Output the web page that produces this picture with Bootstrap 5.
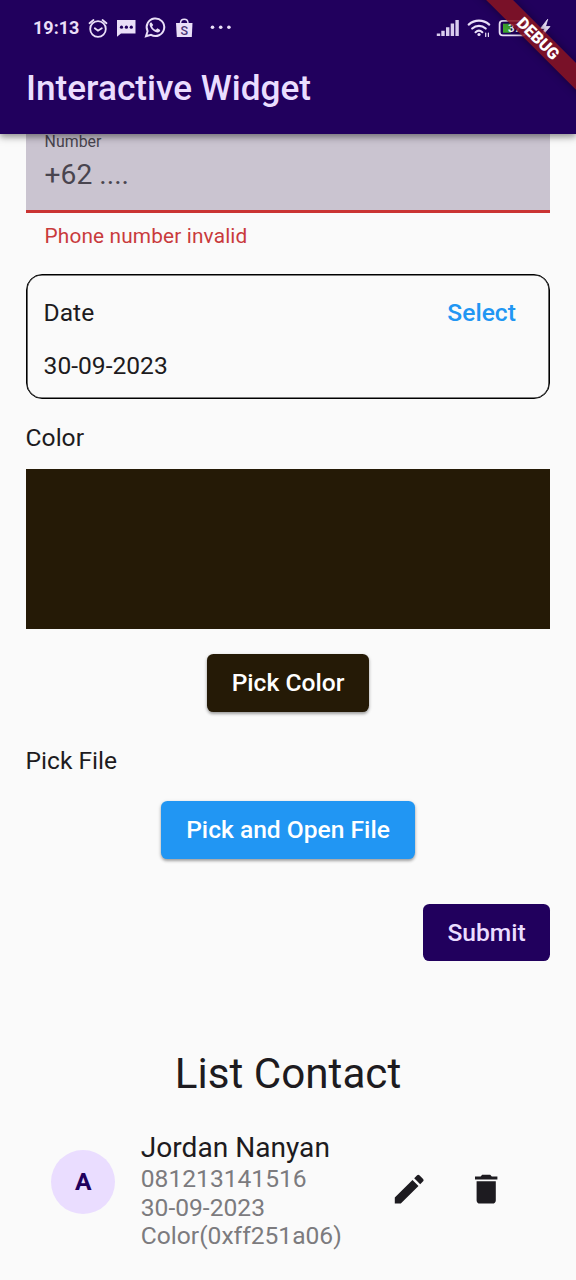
<!DOCTYPE html>
<html lang="en">
<head>
<meta charset="utf-8">
<meta name="viewport" content="width=device-width, initial-scale=1">
<title>Interactive Widget</title>
<link href="https://cdn.jsdelivr.net/npm/bootstrap@5.3.0/dist/css/bootstrap.min.css" rel="stylesheet">
<style>
body{font-family:Roboto,"Liberation Sans",sans-serif;background:#fafafa;color:#1d1b20;width:576px;height:1280px;overflow:hidden;font-size:24.6px}
.fw-mid{font-weight:500}
.topbar{height:133.5px;background:#21005d;color:#eaddff;z-index:2;box-shadow:0 3px 6px rgba(0,0,0,.34),0 1px 12px rgba(0,0,0,.16)}
.statusbar{height:56px;padding-left:33px}
.clock{font-size:18px;font-weight:700;line-height:56px;width:54px;color:#eadff8}
.app-title{font-size:35.2px;line-height:64px;padding-left:26px;letter-spacing:0}
.debug-corner{right:0;top:0;width:120px;height:120px;overflow:hidden;z-index:3}
.debug-tape{right:-62px;top:28.8px;width:200px;height:19.4px;transform:rotate(45deg);background:rgba(134,20,32,.87);box-shadow:0 0 8px rgba(0,0,0,.4);color:#fff;font-size:16.3px;font-weight:900;line-height:19.4px}
.page{padding:0 25.6px}
.phone-field{height:79.5px;background:#cac4d0;border-bottom:3.2px solid #ca3433;padding-left:19px;color:#49454f}
.phone-label{font-size:15.9px;line-height:16px}
.phone-hint{font-size:28.2px;line-height:30px;margin-top:10px}
.error-text{font-size:20.8px;line-height:26px;margin:10px 0 0 19px;color:#c93a3c;letter-spacing:.15px}
.date-card{height:125px;margin-top:24.6px;border:1px solid #000;box-shadow:inset 0 0 0 .6px #000;border-radius:16px;padding:22.4px 33.5px 0 17px}
.line32{line-height:32px}
.select-link{color:#2196f3;text-decoration:none}
.swatch{height:160px;background:#251a06;margin-top:15px}
.app-btn{--bs-btn-border-width:0;--bs-btn-padding-y:0;--bs-btn-padding-x:0;--bs-btn-font-size:24.6px;--bs-btn-font-weight:500;--bs-btn-color:#fff;height:57.6px;line-height:57.6px;border-radius:6.4px;box-shadow:0 2px 3px rgba(0,0,0,.3),0 1px 4px rgba(0,0,0,.12)}
.btn-color{background:#251a06;width:162.4px;margin-top:25.5px}
.btn-file{background:#2196f3;width:253.6px;margin-top:24.5px}
.btn-submit{background:#21005d;color:#eaddff;width:127.6px;margin-top:44.8px;box-shadow:none}
.list-title{font-size:42.2px;line-height:50px;margin-top:88px}
.contact{margin-top:30px;padding:0 51px 0 25.6px;height:123px}
.avatar{width:64px;height:64px;background:#eaddff;color:#21005d;margin-top:-17px;font-size:24.6px}
.contact-text{width:275px;padding-left:25.6px;color:#7c7b7e;line-height:28.8px}
.contact-name{font-size:28.1px;line-height:33px;padding-bottom:1.2px;color:#1d1b20}
.actions{gap:38.4px;margin-top:-4px}
</style>
</head>
<body>
<header class="topbar position-relative">
  <div class="statusbar d-flex">
    <span class="clock">19:13</span>
    <svg width="489" height="56" viewBox="87 0 489 56" fill="none" stroke="#eadff8" stroke-width="1.8" stroke-linecap="round">
      <circle cx="98" cy="29" r="7.8"/><path d="M94.8 28.2l3.2 2.5 3.8-2.5M89.5 23.3l4-3.3M102.5 20l4 3.3"/>
      <path d="M117 20h18.5v13.5H121l-4 3.2z" fill="#eadff8" stroke="none"/>
      <g fill="#21005d" stroke="none"><circle cx="121.5" cy="27.2" r="1.6"/><circle cx="126.4" cy="27.2" r="1.6"/><circle cx="131.3" cy="27.2" r="1.6"/></g>
      <path d="M146 36.2l1.600-5A8.800 8.800 0 1 1 151 34.800z" stroke-width="2"/>
      <path d="M151.2 22.3c-2 .8-2 2.500-1 4.500 1.700 3.200 4 5 7 5.600 1.700.2 3-1 3-2.500l-2.800-1.600-1.500 1.500c-1.600-.5-3-1.700-3.800-3.400l1.100-1.400z" fill="#eadff8" stroke="none"/>
      <path d="M176 23h16.500l-.7 14h-15z" fill="#eadff8" stroke="none"/>
      <path d="M180.5 23c.2-5 7.300-5 7.500 0" stroke-width="1.5"/>
      <text x="184.2" y="34.5" text-anchor="middle" font-family="Roboto, sans-serif" font-size="12.5" font-weight="500" fill="#4a3475" stroke="none">S</text>
      <g fill="#eadff8" stroke="none"><circle cx="212.5" cy="27.3" r="1.8"/><circle cx="220.7" cy="27.3" r="1.8"/><circle cx="228.9" cy="27.3" r="1.8"/></g>
      <path d="M438.5 36v-2.500M443 36v-5.300M447.700 36v-8.800M452.400 36v-12.500M457.100 36v-16" stroke-width="3.400" stroke="#d9cdee" stroke-linecap="butt"/>
      <path d="M468.7 24.6c6-5.200 14.500-5.200 20.500 0M472.200 28.500c4-3.600 9.500-3.600 13.500 0M475.600 32.200c2-1.800 4.700-1.800 6.700 0" stroke-width="2.2"/>
      <circle cx="479" cy="34.5" r="1.6" fill="#eadff8" stroke="none"/>
      <path d="M485.7 36.5v-3.500M488.400 33v3.500" stroke-width="1.2"/>
      <rect x="499.6" y="20.8" width="26" height="14.6" rx="3.2"/>
      <path d="M528.7 26v4" stroke-width="2"/>
      <path d="M503 23.7h8v9h-8z" fill="#3fa62d" stroke="none"/>
      <text x="508" y="32" font-family="Roboto, sans-serif" font-size="11.5" font-weight="700" fill="#fff" stroke="none">37</text>
      <path d="M547.500 19.500l-7 9h4l-2.500 7.500 8-9.500h-4.200z" fill="#eadff8" stroke-width=".8"/>
    </svg>
  </div>
  <h1 class="app-title fw-mid m-0">Interactive Widget</h1>
</header>
<div class="debug-corner position-absolute"><div class="debug-tape position-absolute text-center">DEBUG</div></div>

<main class="page">
  <div class="phone-field">
    <div class="phone-label">Number</div>
    <div class="phone-hint">+62 ....</div>
  </div>
  <div class="error-text">Phone number invalid</div>

  <section class="date-card">
    <div class="d-flex justify-content-between line32">
      <span>Date</span><a href="#" class="select-link fw-mid">Select</a>
    </div>
    <div class="line32" style="margin-top:21px">30-09-2023</div>
  </section>

  <div class="line32" style="margin-top:23.3px">Color</div>
  <div class="swatch"></div>
  <div class="d-flex justify-content-center"><button class="btn app-btn btn-color">Pick Color</button></div>

  <div class="line32" style="margin-top:33px">Pick File</div>
  <div class="d-flex justify-content-center"><button class="btn app-btn btn-file">Pick and Open File</button></div>
  <div class="d-flex justify-content-end"><button class="btn app-btn btn-submit">Submit</button></div>

  <h2 class="list-title text-center fw-normal mb-0">List Contact</h2>
  <div class="contact d-flex align-items-center">
    <div class="avatar rounded-circle d-flex align-items-center justify-content-center fw-bold flex-shrink-0">A</div>
    <div class="contact-text flex-shrink-0">
      <div class="contact-name">Jordan Nanyan</div>
      <div>081213141516</div>
      <div>30-09-2023</div>
      <div>Color(0xff251a06)</div>
    </div>
    <div class="actions d-flex">
      <svg width="38.4" height="38.4" viewBox="0 0 24 24" fill="#1d1b20"><path d="M3 17.250V21h3.750L17.810 9.940l-3.750-3.750L3 17.250zM20.710 7.040a1 1 0 0 0 0-1.410l-2.340-2.340a1 1 0 0 0-1.410 0l-1.830 1.830 3.750 3.750 1.830-1.830z"/></svg>
      <svg width="38.4" height="38.4" viewBox="0 0 24 24" fill="#1d1b20"><path d="M6 19c0 1.100.9 2 2 2h8c1.100 0 2-.9 2-2V7H6v12zM19 4h-3.500l-1-1h-5l-1 1H5v2h14V4z"/></svg>
    </div>
  </div>
</main>
<script src="https://cdn.jsdelivr.net/npm/bootstrap@5.3.0/dist/js/bootstrap.bundle.min.js"></script>
</body>
</html>
